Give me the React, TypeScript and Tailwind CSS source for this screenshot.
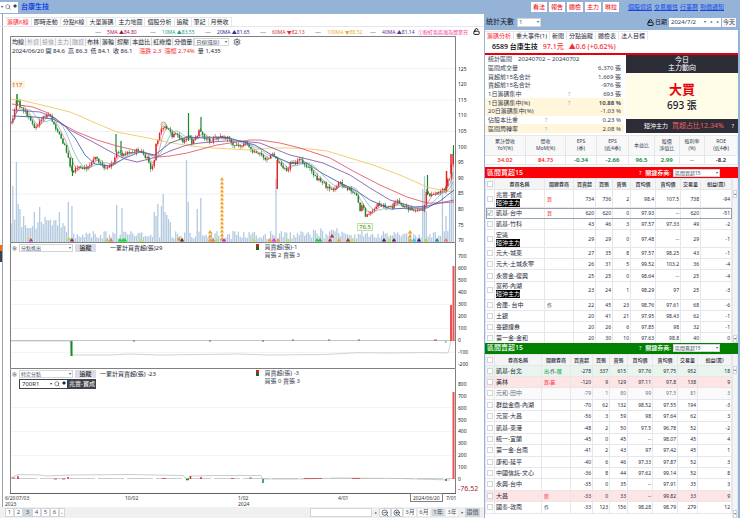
import { useState } from 'react'
import { ZoomIn, ZoomOut, Settings, Search, LockOpen } from 'lucide-react'

type Point = [number, number]

interface Broker {
  name: string
  day?: boolean
  tags?: [string, string][]
  values: string[]
  checked?: boolean
  tone?: string
}

const RED = 'text-red-500'
const GREEN = 'text-green-600'
const DARK = 'text-gray-700'

const buyers: Broker[] = [
  { name: '兆豐-寶成', day: true, tags: [['買', RED]], values: ['734', '736', '2', '98.4', '107.5', '738', '-94'] },
  { name: '凱基-台中', tags: [['買', RED]], values: ['620', '620', '0', '97.93', '--', '620', '-51'], checked: true, tone: 'outline outline-1 -outline-offset-1 outline-gray-400' },
  { name: '凱基-竹科', values: ['43', '46', '3', '97.57', '97.33', '49', '-2'] },
  { name: '宏遠', day: true, values: ['29', '29', '0', '97.48', '--', '29', '-1'] },
  { name: '元大-城東', values: ['27', '35', '8', '97.57', '98.25', '43', '-1'] },
  { name: '元大-土城永寧', values: ['26', '31', '5', '99.52', '103.2', '36', '-4'] },
  { name: '永豐金-復興', values: ['25', '25', '0', '98.64', '--', '25', '-4'] },
  { name: '富邦-內湖', day: true, values: ['23', '24', '1', '98.29', '97', '25', '-3'] },
  { name: '合庫- 台中', tags: [['作', DARK]], values: ['22', '45', '23', '98.76', '97.61', '68', '-6'] },
  { name: '土銀', values: ['20', '41', '21', '97.95', '98.43', '62', '-1'] },
  { name: '臺銀證券', values: ['20', '26', '6', '97.85', '98', '32', '-1'] },
  { name: '第一金-金和', values: ['20', '30', '10', '97.63', '98.8', '40', '0'] },
]

const sellers: Broker[] = [
  { name: '凱基-台北', tags: [['出', GREEN], [',作,', DARK], ['敵', GREEN]], values: ['-278', '337', '615', '97.76', '97.75', '952', '18'], tone: 'bg-[#e8f4ec]' },
  { name: '美林', tags: [['買,', RED], ['贏', RED]], values: ['-120', '9', '129', '97.11', '97.8', '138', '9'], tone: 'bg-[#ffe4e6]' },
  { name: '元和-田中', values: ['-79', '1', '80', '99', '97.5', '81', '3'], tone: 'bg-[#fafafa] text-gray-500' },
  { name: '群益金鼎-內湖', values: ['-70', '62', '132', '98.52', '97.55', '194', '-3'] },
  { name: '元富-大昌', values: ['-56', '3', '59', '98', '97.64', '62', '3'] },
  { name: '凱基-東港', values: ['-48', '2', '50', '97.5', '96.78', '52', '-2'] },
  { name: '統一-宜蘭', values: ['-45', '0', '45', '--', '98.07', '45', '4'] },
  { name: '第一金-台南', values: ['-41', '2', '43', '97', '97.42', '45', '1'] },
  { name: '康和-延平', values: ['-40', '6', '46', '97.33', '97.87', '52', '3'] },
  { name: '中國信託-文心', values: ['-36', '8', '44', '97.62', '99.14', '52', '8'] },
  { name: '永興-台中', values: ['-35', '0', '35', '--', '97.91', '35', '3'] },
  { name: '大昌', tags: [['新', RED]], values: ['-33', '0', '33', '--', '99.82', '33', '9'], tone: 'bg-[#ffe4e6]' },
  { name: '國泰-敦南', tags: [['作', DARK]], values: ['-33', '123', '156', '98.28', '98.79', '279', '12'] },
]

const stats = [
  ['區間成交量', '', '6,370 張'],
  ['買超前15名合計', '', '1,669 張'],
  ['賣超前15名合計', '', '-976 張'],
  ['1日籌碼集中', '?', '693 張'],
  ['1日籌碼集中(%)', '?', '10.88 %'],
  ['20日籌碼集中(%)', '', '-1.03 %'],
  ['佔股本比重', '?', '0.23 %'],
  ['區間周轉率', '?', '2.08 %'],
]

const metrics = [
  { head: ['累計營收', 'YoY(%)'], value: '34.02', color: 'text-red-500', w: 'w-[16%]' },
  { head: ['營收', 'MoM(%)'], value: '84.73', color: 'text-red-500', w: 'w-[16%]' },
  { head: ['EPS', '(季)'], value: '-0.34', color: 'text-green-700', w: 'w-[12%]' },
  { head: ['EPS', '(近4季)'], value: '-2.66', color: 'text-green-700', w: 'w-[13%]' },
  { head: ['本益比'], value: '96.5', color: 'text-green-700', w: 'w-[10%]' },
  { head: ['股價', '淨值比'], value: '2.99', color: 'text-green-700', w: 'w-[10%]' },
  { head: ['殖利率', '(%)'], value: '--', color: 'text-gray-500', w: 'w-[10%]' },
  { head: ['ROE', '(近4季)'], value: '-8.2', color: 'text-gray-800', w: 'w-[13%]' },
]

const averages = [
  { label: '5MA', mark: '▲84.80', color: 'text-[#b01050]' },
  { label: '10MA', mark: '▲83.55', color: 'text-[#2a9d8f]' },
  { label: '20MA', mark: '▲81.65', color: 'text-[#2b2b9b]' },
  { label: '60MA', mark: '▼82.13', color: 'text-[#e03030]' },
  { label: '100MA', mark: '▼88.52', color: 'text-[#e8b030]' },
  { label: '40MA', mark: '▲81.14', color: 'text-[#6a2a90]' },
]

// Price path used to build the daily candles
const path: Point[] = [
  [11, 124], [14, 112], [17, 99], [20, 107], [24, 111], [28, 116], [32, 123], [35, 130], [38, 124], [42, 117],
  [50, 116], [53, 124], [57, 131], [62, 140], [65, 146], [68, 158], [72, 173], [75, 170], [79, 166], [84, 169],
  [88, 168], [92, 162], [96, 158], [100, 164], [105, 167], [110, 166], [114, 160], [117, 152], [121, 155], [126, 155],
  [130, 152], [136, 151], [142, 153], [147, 158], [151, 169], [154, 162], [156, 145], [160, 133], [164, 126], [168, 130],
  [172, 136], [176, 132], [180, 140], [184, 142], [188, 135], [192, 143], [197, 136], [200, 130], [204, 138], [210, 141],
  [216, 138], [222, 137], [228, 138], [234, 145], [240, 146], [244, 142], [247, 143], [252, 150], [257, 155], [262, 154],
  [266, 162], [271, 154], [276, 159], [280, 165], [287, 170], [291, 163], [296, 162], [301, 160], [306, 166], [311, 170],
  [316, 178], [321, 180], [326, 186], [331, 190], [336, 187], [340, 183], [345, 188], [352, 190], [357, 197], [360, 211],
  [362, 204], [365, 215], [370, 214], [375, 206], [380, 204], [386, 209], [392, 206], [398, 202], [403, 206], [410, 210],
  [418, 210], [424, 211], [426, 193], [430, 196], [436, 195], [441, 190], [445, 192], [447, 178], [450, 181], [452, 157], [454, 152],
]

const volumePeaks: Record<number, number> = {
  1: 56, 3: 80, 4: 38, 5: 33, 7: 26, 13: 30, 16: 35, 19: 25, 22: 22, 27: 30, 32: 40, 34: 36, 59: 37, 62: 34,
  80: 30, 81: 26, 82: 38, 84: 36, 85: 48, 86: 30, 87: 27, 88: 23, 89: 20, 98: 82, 99: 40, 104: 33, 106: 44,
  148: 63, 230: 53, 231: 66, 232: 31, 241: 51, 243: 26, 245: 40, 246: 62, 247: 92,
}

// [x, y, colour] of the event triangles above the time axis
const events: [number, number, string][] = [
  [29, 239, '#d8e020'], [31, 240, '#d020d0'], [69, 239, '#b8e020'], [72, 240, '#902050'], [107, 240, '#a0e030'],
  [111, 240, '#f07070'], [120, 240, '#10e020'], [123, 240, '#10e020'], [125, 240, '#10e020'], [141, 240, '#b0f040'],
  [179, 239, '#f09020'], [182, 240, '#702020'], [210, 232, '#f5a020'], [210, 236, '#f5a020'], [210, 240, '#f5a020'],
  [213, 240, '#f07070'], [217, 240, '#b0f040'], [224, 240, '#d020d0'], [254, 240, '#b0f040'], [270, 240, '#f5a020'],
  [274, 240, '#f020f0'], [278, 240, '#f5a020'], [288, 240, '#b0f040'], [317, 240, '#20d030'], [320, 240, '#20c030'],
  [330, 240, '#c03020'], [332, 236, '#d02020'], [339, 240, '#f5a020'], [348, 240, '#c02020'], [352, 240, '#b0f040'],
  [384, 240, '#501070'], [389, 240, '#b0f040'], [394, 240, '#801030'], [410, 232, '#f5a020'], [410, 236, '#f5a020'],
  [410, 240, '#f5a020'], [414, 240, '#20d0e0'], [419, 240, '#2020a0'], [426, 240, '#a0e030'], [437, 240, '#209090'],
  [446, 240, '#f07070'],
]

const maLines: { color: string; points: string }[] = [
  { color: '#f3c04a', points: '11,99 25,101 50,107 70,112 80,116 93,122 117,132 143,137 167,142 190,146 213,148 250,150 270,148 290,148 310,149 327,151 350,158 373,165 400,175 427,187 440,190 454,192' },
  { color: '#e04858', points: '12,104 33,107 48,113 62,124 77,132 97,140 117,146 143,152 157,157 170,156 187,153 217,145 250,140 260,140 280,143 300,148 330,158 353,171 380,185 407,197 427,203 440,203 454,202' },
  { color: '#7a4aa0', points: '12,110 40,112 55,118 70,130 93,142 113,153 125,159 137,162 157,157 170,151 187,145 200,143 225,141 240,141 260,143 275,149 290,155 307,159 323,163 350,175 370,188 390,200 413,207 427,206 440,203 454,200' },
  { color: '#3a4aa8', points: '12,116 35,117 53,119 65,126 75,138 85,155 95,164 110,166 125,158 140,152 155,155 170,143 187,137 205,138 225,137 240,141 255,145 275,157 290,163 307,163 320,172 340,183 355,190 370,200 390,209 410,208 427,208 440,201 454,190' },
]

const noise = (n: number) => {
  const v = Math.sin(n * 127.1 + 31.7) * 43758.5453
  return v - Math.floor(v)
}

const priceAt = (x: number) => {
  const i = path.findIndex(p => p[0] >= x)
  if (i <= 0) return path[i === 0 ? 0 : path.length - 1][1]
  const [x0, y0] = path[i - 1]
  const [x1, y1] = path[i]
  return y0 + ((x - x0) / (x1 - x0)) * (y1 - y0)
}

const candles = Array.from({ length: 248 }, (_, i) => {
  const x = 11 + i * 1.79
  const close = priceAt(x) + (noise(i) - 0.5) * 4
  const open = priceAt(x - 1.79) + (noise(i - 1) - 0.5) * 4
  return {
    x,
    open,
    close,
    high: Math.min(open, close) - noise(i + 500) * 3,
    low: Math.max(open, close) + noise(i + 900) * 3,
    volume: volumePeaks[i] ?? (x < 65 ? 13 : 3) + noise(i + 300) * (x < 65 ? 10 : x > 300 && x < 340 ? 11 : 8),
  }
})

const movingAverage = (days: number) =>
  candles
    .map((c, i) => {
      const part = candles.slice(Math.max(0, i - days + 1), i + 1)
      return `${c.x},${part.reduce((sum, p) => sum + p.close, 0) / part.length}`
    })
    .join(' ')

function Dropdown({ label, value, className }: { label: string; value: string; className: string }) {
  return (
    <span className={`relative inline-flex bg-white border border-gray-300 ${className}`}>
      <select aria-label={label} className="w-full appearance-none bg-transparent pl-px text-gray-600 outline-none">
        <option>{value}</option>
      </select>
      <span className="absolute right-px top-0 text-[4px] leading-[6px] text-gray-600 pointer-events-none">▾</span>
    </span>
  )
}

function AxisLabels({ items }: { items: [string, number][] }) {
  return (
    <g fontSize="5" fill="#222">
      {items.map(([text, y]) => (
        <text key={text} x="458" y={y + 2}>{text}</text>
      ))}
    </g>
  )
}

function Frame({ top, bottom }: { top: number; bottom: number }) {
  return (
    <path d={`M10.5 ${bottom}V${top + 0.5}H455.5V${bottom}`} fill="none" stroke="#808080" />
  )
}

function PriceChart() {
  const ticks = Array.from({ length: 12 }, (_, i): [string, number] => [String(125 - i * 5), 68.5 + i * 15.6])
  return (
    <svg viewBox="10 36 474 206" className="block w-full h-auto overflow-visible" role="img" aria-label="日線圖">
      {[68.5, 100, 131.5, 162.5, 194].map(y => (
        <path key={y} d={`M11 ${y}H455`} stroke="#f0f0f0" />
      ))}
      {candles.map(c => (
        <rect key={c.x} x={c.x - 0.6} y={242 - c.volume} width="1.3" height={c.volume} fill="#b4cae0" />
      ))}
      {candles.map(c => {
        const color = c.close < c.open ? '#e02828' : '#17882c'
        return (
          <g key={c.x} fill={color}>
            <rect x={c.x - 0.25} y={c.high} width="0.6" height={c.low - c.high} />
            <rect x={c.x - 0.7} y={Math.min(c.open, c.close)} width="1.5" height={Math.max(0.8, Math.abs(c.open - c.close))} />
          </g>
        )
      })}
      <rect x="276.5" y="160" width="1.5" height="29" fill="#e02828" />
      <path d="M116 134v18M121 141v11M188.500 113v28M201 117v14M427.500 175v20M72.500 158v18" stroke="#17882c" strokeWidth="1.200" />
      <path d="M17 94v12" stroke="#17882c" strokeWidth="1.500" />
      <path d="M453.500 145v12" stroke="#17882c" />
      <path d="M446.500 171v21M451 154v20" stroke="#e02828" strokeWidth="1.500" />
      {maLines.map(line => (
        <polyline key={line.color} points={line.points} fill="none" stroke={line.color} strokeWidth="0.8" />
      ))}
      <polyline points={movingAverage(10)} fill="none" stroke="#4aa8a8" strokeWidth="0.6" />
      <polyline points={movingAverage(5)} fill="none" stroke="#b05070" strokeWidth="0.5" />
      {Array.from({ length: 16 }, (_, i) => (
        <path key={i} d={`M222 ${177 + i * 4}l2 3.400h-4z`} fill="#f5a020" />
      ))}
      {events.map(([x, y, color]) => (
        <path key={`${x}-${y}`} d={`M${x} ${y - 2}l2.200 3.500h-4.400z`} fill={color} />
      ))}
      <circle cx="163.500" cy="124.500" r="2.500" fill="#e8e0c8" stroke="#aaa088" strokeWidth="0.8" />
      <rect x="11" y="81" width="14" height="7" fill="#fdf3d8" />
      <text x="12" y="87" fontSize="6" fill="#d8402c">117</text>
      <rect x="357.500" y="223.500" width="15" height="7" fill="#f8fcf0" stroke="#c8dca8" />
      <text x="359" y="229" fontSize="6" fill="#4a8a30">76.5</text>
      <Frame top={36} bottom={242} />
      <AxisLabels items={ticks} />
    </svg>
  )
}

function TotalChart() {
  const ticks = [700, 600, 500, 400, 300, 200, 100, 0, -100, -200].map((v, i): [string, number] => [String(v), 255.5 + i * 12.1])
  return (
    <svg viewBox="10 242 474 126" className="block w-full h-auto" role="img" aria-label="累計買賣超">
      {[280.5, 304.5, 328.5, 352.5].map(y => (
        <path key={y} d={`M11 ${y}H455`} stroke="#f4f4f4" />
      ))}
      <path d="M11 340.500H455" stroke="#c4c4c4" />
      <polyline points="11,341 70,341 72,355 110,355 130,354 160,355 240,354 267,355 325,354.500 357,352.700 390,353 430,352.500 448,353 451,341" fill="none" stroke="#b8c4bc" strokeWidth="0.7" />
      <path d="M71.500 341v15" stroke="#17882c" strokeWidth="2" />
      <path d="M133 341h2M209 341h2M292 340h2M328 340h2M358 340h2M434 340h3" stroke="#c04040" />
      <path d="M262 341h2M445 342h1.500" stroke="#17882c" />
      <path d="M451 305v36M453.500 266v75" stroke="#f05050" strokeWidth="2" />
      <Frame top={242} bottom={368} />
      <AxisLabels items={ticks} />
    </svg>
  )
}

function BranchChart() {
  const ticks = [800, 700, 600, 500, 400, 300, 200, 100, 0].map((v, i): [string, number] => [String(v), 384 + i * 11.85])
  return (
    <svg viewBox="10 368 474 125" className="block w-full h-auto" role="img" aria-label="特定分點買賣超">
      {[407.5, 431.5, 455.5].map(y => (
        <path key={y} d={`M11 ${y}H455`} stroke="#f4f4f4" />
      ))}
      <path d="M11 478.500H455" stroke="#cccccc" strokeDasharray="26 3" />
      <polyline points="11,478 18,474.500 40,475 46,476 70,475 130,474.500 183,475.500 187,479 190,476 215,475.500 261,475.500 263,479 300,479 340,478 400,478.500 450,480" fill="none" stroke="#b8c4bc" strokeWidth="0.8" />
      <path d="M18 476v3M68 477v2M190.500 476v3M201 477v2" stroke="#d03030" strokeWidth="1.500" />
      <path d="M12 478h3M54 479h3M62 479h3M162 478.500h4M231 478.500h3M249 478h3M304 478.500h18M352 478.500h8" stroke="#d06060" />
      <path d="M186 479.500h3M263 479v4M445 480h2" stroke="#17882c" strokeWidth="1.500" />
      <path d="M453.500 392v87" stroke="#f05050" strokeWidth="2" />
      <Frame top={368} bottom={493} />
      <AxisLabels items={ticks} />
      <text x="458" y="491" fontSize="7" fill="#a02828">-76.52</text>
    </svg>
  )
}

function TimeAxis() {
  return (
    <svg viewBox="10 493 474 14" className="block w-full h-auto overflow-visible" aria-hidden="true">
      <path d="M10 493.500H456" stroke="#606060" />
      <g fontSize="5" fill="#333">
        <text x="5" y="500">6/20</text>
        <text x="16" y="500">07/03</text>
        <text x="5" y="506">2023</text>
        <text x="125" y="500">10/02</text>
        <text x="238" y="500">1/02</text>
        <text x="238" y="506">2024</text>
        <text x="338" y="500">4/01</text>
        <text x="446" y="500">7/01</text>
      </g>
      <rect x="410.500" y="493.500" width="32" height="8" fill="#fff" stroke="#808080" />
      <text x="413" y="500" fontSize="5" fill="#333">2024/06/20</text>
    </svg>
  )
}

function Legend({ net, detail }: { net: string; detail: string }) {
  return (
    <div className="absolute left-[52%] top-px flex gap-[5px] leading-[8px] text-gray-700">
      <svg viewBox="0 0 3 6" className="mt-px w-[3px] h-[6px]">
        <path d="M0 0h3v3H0z" fill="#d02020" />
        <path d="M0 3h3v3H0z" fill="#107020" />
      </svg>
      <div>
        <p>{net}</p>
        <p>{detail}</p>
      </div>
    </div>
  )
}

function PanelTools({ value, total, gap }: { value: string; total: string; gap: string }) {
  return (
    <div className={`absolute left-[2px] top-[2px] flex items-center ${gap}`}>
      <Settings className="w-[5px] h-[5px] text-gray-700" />
      <Dropdown label="指標" value={value} className="ml-[2px] w-[54px] h-[8px] text-[5px] leading-[6px]" />
      <button className="ml-[2px] w-[21px] h-[8px] bg-[#dcdce6] text-[6px] leading-[8px]">追蹤</button>
      <span className="text-gray-800">一累計買賣超(張){total}</span>
    </div>
  )
}

function Tabs({ items, label }: { items: string[]; label: string }) {
  const [active, setActive] = useState(items[0])
  return (
    <nav aria-label={label} className="flex h-[10px] shrink-0 items-end">
      {items.map(item => (
        <button
          key={item}
          onClick={() => setActive(item)}
          className={`h-[9px] px-[2px] border-x-0 border-r border-t border-gray-200 leading-[8px] whitespace-nowrap bg-white ${item === active ? 'text-red-500' : 'text-gray-800'}`}
        >
          {item}
        </button>
      ))}
    </nav>
  )
}

function ChartToolbar() {
  const tools = ['均線', '外資', '投信', '主力', '融資', '布林', '籌輪', '撐壓', '本益比', '紅綠燈', '分價量']
  return (
    <div className="absolute left-px top-[2px]">
      <div className="flex items-center h-[8px]">
        {tools.map((tool, i) => (
          <button
            key={tool}
            className={`h-[8px] px-px border-r border-gray-300 bg-[#f6f6f6] leading-[8px] ${i > 0 && i < 5 ? 'text-gray-400' : 'text-gray-800'}`}
          >
            {tool}
          </button>
        ))}
        <Dropdown label="週期" value="日線(還原)" className="w-[35px] h-[8px] text-[5px] leading-[6px]" />
        <Settings className="ml-1 w-[8px] h-[8px] text-gray-800" />
      </div>
      <p className="flex gap-[3px] pl-px pt-px leading-[8px] text-gray-800">
        <span>2024/06/20 開 84.6</span>
        <span>高 86.3</span>
        <span>低 84.1</span>
        <span>收 86.1</span>
        <span className="pl-1 text-red-500">漲跌 2.3</span>
        <span className="text-red-500">漲幅 2.74%</span>
        <span>量 1,435</span>
      </p>
    </div>
  )
}

function ChartFooter() {
  return (
    <footer className="mt-auto flex h-[11px] shrink-0 items-center bg-[#f0f0f0] pl-[5px] text-gray-600">
      {['1', '2', '3', '4', '5', '6'].map(n => (
        <button key={n} className={`w-[9px] h-[9px] border border-gray-300 leading-[7px] ${n === '3' ? 'bg-gray-300' : 'bg-white'}`}>
          {n}
        </button>
      ))}
      <button aria-label="新增頁" className="w-[6px] h-[9px] border border-gray-300 bg-white text-[4px] leading-[6px]">+</button>
      <input aria-label="捲動範圍" className="ml-auto w-[62px] h-[9px] border border-gray-300 bg-white" />
      <button aria-label="往後" className="w-[7px] text-[4px]">▸</button>
      <button aria-label="縮小" className="w-[12px] h-[9px] border border-gray-300 bg-white"><ZoomOut className="mx-auto w-[8px] h-[8px] text-gray-800" /></button>
      <button aria-label="放大" className="w-[12px] h-[9px] border border-gray-300 bg-white"><ZoomIn className="mx-auto w-[8px] h-[8px] text-gray-800" /></button>
      {['3月', '6月', '1年', '3年'].map(range => (
        <button key={range} className={`w-[14px] h-[9px] border border-gray-200 leading-[7px] ${range === '1年' ? 'bg-gray-300' : 'bg-white'}`}>
          {range}
        </button>
      ))}
      <button aria-label="更多範圍" className="w-[6px] text-[4px]">▾</button>
      <button className="mr-1 w-[15px] h-[9px] bg-gray-300 leading-[9px]">還價</button>
    </footer>
  )
}

function ChartPane() {
  return (
    <main className="flex min-w-0 flex-1 flex-col">
      <div className="pl-[5px] pt-[2px]">
        <Tabs label="圖表" items={['籌碼K線', '即時走動', '分點K線', '大單籌碼', '主力地圖', '個股分析', '追蹤', '筆記', '月營收']} />
      </div>
      <div className="flex h-[10px] items-center border-t border-gray-200 pl-[95px] pr-1">
        {averages.map(ma => (
          <span key={ma.label} className={`w-[55px] whitespace-nowrap ${ma.color}`}>
            <span className="mr-[6px] text-gray-500">—</span>
            <span className="text-[5px]">{ma.label} {ma.mark}</span>
          </span>
        ))}
        <span className="-ml-[7px] whitespace-nowrap text-[5px] text-pink-500">①粉紅色區塊為營業日</span>
        <LockOpen className="ml-auto w-[7px] h-[7px] text-black" strokeWidth={3} />
      </div>
      <div className="pl-[10px]">
        <section className="relative">
          <PriceChart />
          <ChartToolbar />
        </section>
        <section className="relative">
          <TotalChart />
          <PanelTools value="分點進出" total="29" gap="[&>span:last-child]:ml-[14px]" />
          <Legend net="買賣超(張)-1" detail="買張 2 賣張 3" />
        </section>
        <section className="relative">
          <BranchChart />
          <PanelTools value="特定分點" total=" -23" gap="[&>span:last-child]:ml-[4px]" />
          <div className="absolute left-[9px] top-[11px] flex h-[10px] items-center bg-[#404048] p-px text-white">
            <input aria-label="分點代號" defaultValue="700R1" className="w-[29px] h-[8px] bg-white pl-[2px] text-gray-800" />
            <span className="flex h-[8px] w-[18px] items-center justify-around bg-white text-[4px] text-gray-800">
              ▾<Search className="w-[6px] h-[6px]" />◆
            </span>
            <span className="w-[28px] pl-[2px] whitespace-nowrap">兆豐-寶成</span>
          </div>
          <Legend net="買賣超(張) -3" detail="買張 0 賣張 3" />
        </section>
        <TimeAxis />
      </div>
      <ChartFooter />
    </main>
  )
}

function Check({ name, checked }: { name: string; checked?: boolean }) {
  return (
    <input
      type="checkbox"
      aria-label={name}
      defaultChecked={checked}
      className="mx-auto block w-[6px] h-[6px] appearance-none border border-gray-300 bg-white text-[5px] leading-[4px] text-gray-800 checked:before:content-['✓']"
    />
  )
}

interface BrokerListProps {
  title: string
  filter: string
  rows: Broker[]
  color: string
  height: string
  nameWidth: string
}

function BrokerList({ title, filter, rows, color, height, nameWidth }: BrokerListProps) {
  return (
    <section className="flex min-h-0 flex-1 flex-col">
      <header className={`flex h-[11px] shrink-0 items-center pl-[2px] pr-[18px] text-white ${color}`}>
        <h2 className="text-[7px] font-medium">{title}</h2>
        <span className="ml-auto mr-1 text-[5px]">?</span>
        <span className="mr-[2px] font-medium">關鍵券商:</span>
        <Dropdown label="關鍵券商" value={filter} className="w-[47px] h-[8px] text-[5px] leading-[6px]" />
      </header>
      <div className="flex min-h-0 flex-1 overflow-hidden">
        <table className={`flex-1 table-fixed border-collapse text-[5px] text-gray-800 ${height}`}>
          <thead className="bg-[#f4f4f4]">
            <tr className="h-[11px]">
              <th className="w-[9px] border border-gray-200"><Check name="全選" /></th>
              <th className={`border border-gray-200 font-medium ${nameWidth}`}>券商名稱</th>
              <th className="w-[29px] border border-gray-200 font-medium">關鍵券商</th>
              <th className="w-[22px] border border-gray-200 font-medium">買賣超</th>
              <th className="w-[17px] border border-gray-200 font-medium">買張</th>
              <th className="w-[18px] border border-gray-200 font-medium">賣張</th>
              <th className="w-[25px] border border-gray-200 font-medium">買均價</th>
              <th className="w-[25px] border border-gray-200 font-medium">賣均價</th>
              <th className="w-[20px] border border-gray-200 font-medium">交易量</th>
              <th className="border border-gray-200 font-medium">損益(萬)</th>
            </tr>
          </thead>
          <tbody>
            {rows.map(row => (
              <tr key={row.name} className={`${row.day ? 'h-[18px]' : 'h-[11px]'} ${row.tone ?? ''}`}>
                <td className="border border-gray-200"><Check name={row.name} checked={row.checked} /></td>
                <td className="border border-gray-200 pl-px text-[6px] leading-[8px] whitespace-nowrap">
                  {row.name}
                  {row.day && <span className="block w-[24px] bg-black text-white leading-[8px]">短沖主力</span>}
                </td>
                <td className="border border-gray-200 pl-[2px] whitespace-nowrap">
                  {row.tags?.map(([text, tint]) => <span key={text} className={tint}>{text}</span>)}
                </td>
                {row.values.map((value, i) => (
                  <td key={i} className="border border-gray-200 pr-px text-right">{value}</td>
                ))}
              </tr>
            ))}
          </tbody>
        </table>
        <div className="flex w-[6px] flex-col justify-between border-x border-gray-200 bg-[#f4f4f4] pt-[12px] text-center text-[4px] leading-[6px] text-gray-500">
          <span className="border border-gray-300 bg-white">▴</span>
          <span className="border border-gray-300 bg-white">▾</span>
        </div>
      </div>
    </section>
  )
}

function Summary() {
  return (
    <div className="flex h-[78px] shrink-0 gap-[2px]">
      <dl className="flex flex-1 flex-col text-gray-700">
        <div className="flex flex-1 items-center gap-[6px] px-[3px]">
          <dt>統計區間</dt>
          <dd>20240702 ~ 20240702</dd>
        </div>
        {stats.map(([name, help, value], i) => (
          <div key={name} className={`flex flex-1 items-center px-[3px] ${[4, 5, 7].includes(i) ? 'bg-[#fff6dc]' : ''}`}>
            <dt className={i > 5 ? 'w-[57px]' : 'w-[80px]'}>{name}</dt>
            <dd className="text-[5px] text-gray-400">{help}</dd>
            <dd className={`ml-auto ${i === 4 ? 'font-semibold' : ''}`}>{value}</dd>
          </div>
        ))}
      </dl>
      <div className="flex w-[112px] flex-col bg-[#fffde8] text-center">
        <p className="bg-[#2d2d38] py-px text-[7px] leading-[8px] text-white">今日<br />主力動向</p>
        <div className="flex flex-1 flex-col items-center justify-center">
          <p className="text-[13px] leading-[18px] font-bold text-red-600">大買</p>
          <p className="text-[10px] leading-[14px] font-medium text-gray-900">693 張</p>
        </div>
        <p className="flex h-[14px] items-center justify-end gap-1 bg-[#2d2d38] pr-1 text-white">
          短沖主力
          <span className="text-[7px] text-[#f06060]">買超占比12.34%</span>
          <span className="ml-1 text-[5px]">?</span>
        </p>
      </div>
    </div>
  )
}

function SidePane() {
  return (
    <aside className="flex w-[256px] shrink-0 flex-col border-l border-r-2 border-[#95b3d7] bg-white">
      <div className="flex h-[16px] shrink-0 items-center bg-[#95b3d7] pl-px pr-[2px]">
        <label className="flex items-center gap-[3px] text-[7px] text-gray-900">
          統計天數
          <Dropdown label="統計天數" value="1" className="w-[24px] h-[9px] text-[6px] leading-[7px]" />
        </label>
        <LockOpen className="ml-auto w-[7px] h-[7px] text-black" strokeWidth={3} />
        <label className="ml-px flex items-center gap-[2px] text-gray-900">
          日期
          <input defaultValue="2024/7/2" className="w-[33px] h-[9px] bg-white pl-[2px] text-gray-700" />
        </label>
        <span className="flex h-[9px] w-[19px] items-center justify-around bg-white text-[4px] text-gray-600">
          <button aria-label="開啟日曆">▾</button>
          <button aria-label="前一天">◂</button>
          <button aria-label="後一天">▸</button>
        </span>
        <button className="ml-px h-[9px] w-[14px] bg-[#f4f4f4] leading-[9px] text-gray-700">今天</button>
      </div>
      <Tabs label="分析" items={['籌碼分析', '重大事件(1)', '新聞', '分點追蹤', '體檢表', '法人目標']} />
      <h1 className="flex h-[15px] shrink-0 items-center gap-[5px] border-b-2 border-red-600 pl-[7px] text-[7px] font-medium">
        <span>6589 台康生技</span>
        <span className="text-red-500">97.1元</span>
        <span className="text-red-500">▲0.6 (+0.62%)</span>
      </h1>
      <Summary />
      <div className="my-[2px] shrink-0 border-y border-gray-200">
        <table className="w-full table-fixed border-collapse text-center">
          <thead>
            <tr className="h-[19px]">
              {metrics.map(m => (
                <th key={m.head.join()} className={`border-r border-gray-200 bg-[#f8f8f8] text-[5px] leading-[7px] font-normal text-gray-700 ${m.w}`}>
                  {m.head.map(text => <span key={text} className="block">{text}</span>)}
                </th>
              ))}
            </tr>
          </thead>
          <tbody>
            <tr className="h-[9px]">
              {metrics.map(m => (
                <td key={m.head.join()} className={`border-r border-t border-gray-200 font-semibold leading-[8px] ${m.color}`}>{m.value}</td>
              ))}
            </tr>
          </tbody>
        </table>
      </div>
      <BrokerList title="區間買超15" filter="區間買超15" rows={buyers} color="bg-[#fb0007]" height="h-[166px]" nameWidth="w-[50px]" />
      <BrokerList title="區間賣超15" filter="區間賣超15" rows={sellers} color="bg-[#008000]" height="h-[160px]" nameWidth="w-[47px]" />
    </aside>
  )
}

function TopBar() {
  return (
    <header className="flex h-[14px] shrink-0 items-center bg-[#95b3d7] pr-4">
      <div className="flex h-[11px] w-[18px] items-center justify-around bg-white text-[4px] text-gray-700">
        ▾<Search className="w-[6px] h-[6px]" />◆
      </div>
      <strong className="pl-[3px] text-[7px] font-bold text-blue-700">台康生技</strong>
      <div className="ml-auto flex gap-[2px]">
        {['看法', '報告', '體檢', '主力', '咻拉'].map(item => (
          <button key={item} className="h-[10px] w-[16px] bg-white leading-[10px] text-red-600">{item}</button>
        ))}
      </div>
      <nav aria-label="快速連結" className="ml-[9px] flex gap-[2px]">
        {['個股資訊', '交易屬性', '行事曆', '到價通知'].map(item => (
          <a key={item} href="#" className="text-blue-700 underline">{item}</a>
        ))}
      </nav>
    </header>
  )
}

// Collapsed dock on the window's left edge
function Rail() {
  return (
    <div className="-mr-[3px] flex w-[3px] shrink-0 flex-col border-r border-gray-400 bg-white">
      <span className="flex-[9]" />
      <span className="h-[6px] bg-orange-500" />
      <span className="h-[11px] bg-gray-700" />
      <span className="flex-[10]" />
    </div>
  )
}

export default function App() {
  return (
    <div className="flex h-screen flex-col overflow-hidden bg-white text-[6px] leading-[8px] [font-family:'Noto_Sans','Noto_Sans_CJK_TC',sans-serif]">
      <TopBar />
      <div className="flex min-h-0 flex-1">
        <Rail />
        <ChartPane />
        <SidePane />
      </div>
    </div>
  )
}
